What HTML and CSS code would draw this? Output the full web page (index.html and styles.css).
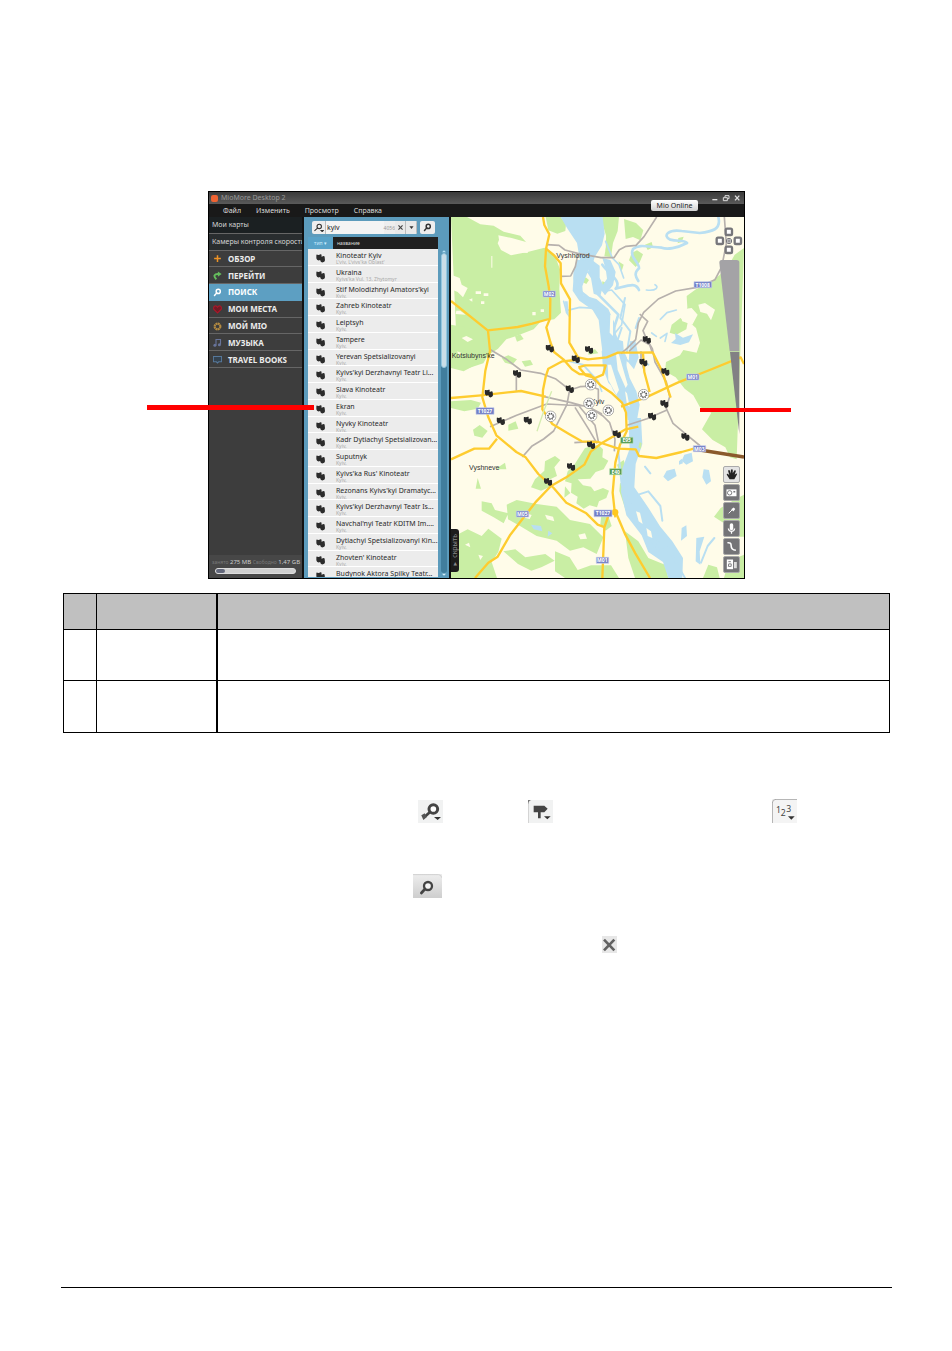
FILE: index.html
```html
<!DOCTYPE html>
<html lang="ru">
<head>
<meta charset="utf-8">
<title>MioMore Desktop 2</title>
<link rel="stylesheet" href="styles.css">
</head>
<body>
<svg class="defs" aria-hidden="true">
  <symbol id="masks" viewBox="-13 -12 26 26"><path d="M-12-8q0-3 3-2l4 1 5-2q3-1 3 2v5l6-2q3 0 3 3l1 9q-1 5-6 6-5 1-7-3l-1-4-5 2q-5-2-6-7z"/></symbol>
  <symbol id="lens" viewBox="0 0 24 24"><circle cx="14" cy="9" r="5.5" fill="none" stroke="currentColor" stroke-width="4"/><path d="M10 13l-6 7" stroke="currentColor" stroke-width="4" stroke-linecap="round"/></symbol>
</svg>
<main class="page">
  <figure class="figure">
    <div class="app">
      <header class="titlebar">
        <span class="logo"></span><span class="title">MioMore Desktop 2</span>
        <svg class="window-icons" viewBox="0 0 90 24" fill="none" stroke="#ddd" stroke-width="4"><path d="M4 17h15"/><path d="M37 11h12v9H37zM42 9V5h12v9h-4" stroke-width="3"/><path d="M72 5l13 14M85 5L72 19"/></svg>
      </header>
      <nav class="menubar"><a href="#">Файл</a><a href="#">Изменить</a><a href="#">Просмотр</a><a href="#">Справка</a></nav>
      <button class="online">Mio Online</button>
      <div class="workspace">
        <aside class="sidebar">
          <nav class="sections">
            <a class="plain dark" href="#">Мои карты</a>
            <a class="plain" href="#">Камеры контроля скорости</a>
            <a href="#"><svg viewBox="0 0 24 24"><path d="M12 3v18M3 12h18" stroke="#ee9326" stroke-width="4"/></svg>ОБЗОР</a>
            <a href="#"><svg viewBox="0 0 24 24"><path d="M9 22C0 14 3 7 15 8" fill="none" stroke="#65bd5d" stroke-width="5"/><path d="M13 1l10 7-10 7z" fill="#65bd5d"/></svg>ПЕРЕЙТИ</a>
            <a class="active" href="#"><svg viewBox="0 0 24 24"><use href="#lens"/></svg>ПОИСК</a>
            <a href="#"><svg viewBox="0 0 24 24"><path d="M12 21L2 11C0 2 8 0 12 6c4-6 12-4 10 5z" fill="#721a25" stroke="#ad1729" stroke-width="3"/></svg>МОИ МЕСТА</a>
            <a href="#"><svg viewBox="0 0 24 24"><circle cx="12" cy="12" r="8" fill="none" stroke="#b48b42" stroke-width="5" stroke-dasharray="5 1.3"/><circle cx="12" cy="12" r="6" fill="none" stroke="#b48b42" stroke-width="2"/></svg>МОЙ MIO</a>
            <a href="#"><svg viewBox="0 0 24 24"><path d="M8 19V4h12v13" fill="none" stroke="#68749a" stroke-width="3"/><circle cx="5" cy="19" r="4" fill="#68749a"/><circle cx="17" cy="18" r="4" fill="#68749a"/></svg>МУЗЫКА</a>
            <a href="#"><svg viewBox="0 0 24 24"><path d="M1 4h22v14h-8l-3 3-3-3H1z" fill="#34424f" stroke="#56789b" stroke-width="3"/></svg>TRAVEL BOOKS</a>
          </nav>
          <div class="storage">
            <p><span>занято</span> 275 MB <span>Свободно</span> 1,47 GB</p>
            <div class="meter"><i></i></div>
          </div>
        </aside>
        <section class="results">
          <form class="search">
            <div class="search-box">
              <svg class="search-type" viewBox="0 0 30 24"><circle cx="17" cy="9" r="6" fill="none" stroke="#333" stroke-width="3"/><path d="M13 13l-9 8M22 20l3 3 3-3z" stroke="#333" stroke-width="3"/></svg>
              <input type="text" value="kyiv" aria-label="Поиск">
              <span class="count">4056</span>
              <button type="button" aria-label="Очистить"><svg viewBox="0 0 24 24"><path d="M5 5l14 14M19 5L5 19" stroke="#444" stroke-width="4"/></svg></button>
              <button type="button" aria-label="Ещё"><svg viewBox="0 0 24 24"><path d="M5 8h14l-7 9z" fill="#333"/></svg></button>
            </div>
            <button class="go" type="button" aria-label="Найти"><svg viewBox="0 0 24 24"><use href="#lens"/></svg></button>
          </form>
          <div class="list-head"><button>тип ▾</button><span>название</span></div>
          <div class="list-area">
            <div class="list-clip"><ul class="list">
              <li><svg><use href="#masks"/></svg><div><b>Kinoteatr Kyiv</b><small>L'viv, L'vivs'ka Oblast'</small></div></li>
              <li><svg><use href="#masks"/></svg><div><b>Ukraina</b><small>Kyivs'ka Vul. 13, Zhytomyr</small></div></li>
              <li><svg><use href="#masks"/></svg><div><b>Stif Molodizhnyi Amators'kyi</b><small>Kyiv,</small></div></li>
              <li><svg><use href="#masks"/></svg><div><b>Zahreb Kinoteatr</b><small>Kyiv,</small></div></li>
              <li><svg><use href="#masks"/></svg><div><b>Leiptsyh</b><small>Kyiv,</small></div></li>
              <li><svg><use href="#masks"/></svg><div><b>Tampere</b><small>Kyiv,</small></div></li>
              <li><svg><use href="#masks"/></svg><div><b>Yerevan Spetsializovanyi</b><small>Kyiv,</small></div></li>
              <li><svg><use href="#masks"/></svg><div><b>Kyivs'kyi Derzhavnyi Teatr Li...</b><small>Kyiv,</small></div></li>
              <li><svg><use href="#masks"/></svg><div><b>Slava Kinoteatr</b><small>Kyiv,</small></div></li>
              <li><svg><use href="#masks"/></svg><div><b>Ekran</b><small>Kyiv,</small></div></li>
              <li><svg><use href="#masks"/></svg><div><b>Nyvky Kinoteatr</b><small>Kyiv,</small></div></li>
              <li><svg><use href="#masks"/></svg><div><b>Kadr Dytiachyi Spetsializovan...</b><small>Kyiv,</small></div></li>
              <li><svg><use href="#masks"/></svg><div><b>Suputnyk</b><small>Kyiv,</small></div></li>
              <li><svg><use href="#masks"/></svg><div><b>Kyivs'ka Rus' Kinoteatr</b><small>Kyiv,</small></div></li>
              <li><svg><use href="#masks"/></svg><div><b>Rezonans Kyivs'kyi Dramatyc...</b><small>Kyiv,</small></div></li>
              <li><svg><use href="#masks"/></svg><div><b>Kyivs'kyi Derzhavnyi Teatr Is...</b><small>Kyiv,</small></div></li>
              <li><svg><use href="#masks"/></svg><div><b>Navchal'nyi Teatr KDITM Im....</b><small>Kyiv,</small></div></li>
              <li><svg><use href="#masks"/></svg><div><b>Dytiachyi Spetsializovanyi Kin...</b><small>Kyiv,</small></div></li>
              <li><svg><use href="#masks"/></svg><div><b>Zhovten' Kinoteatr</b><small>Kyiv,</small></div></li>
              <li><svg><use href="#masks"/></svg><div><b>Budynok Aktora Spilky Teatr...</b></div></li>
            </ul></div>
            <div class="scroll"><svg viewBox="0 0 18 9"><path d="M3 8l6-6 6 6z" fill="#b5e2f6"/></svg><div class="track"><i></i></div><svg viewBox="0 0 18 9"><path d="M3 1l6 6 6-6z" fill="#d5f0fa"/></svg></div>
          </div>
        </section>
        <section class="map">
          <svg class="map-art" viewBox="18 97 879 1083" preserveAspectRatio="xMidYMid slice">
            <rect x="18" y="97" width="879" height="1083" fill="#fffce9"/>
            <g fill="#c9eea4">
              <path d="M18 97h48l40 22 40 4 30 18 50 12 25 28-85-25-8 20 10 20 30 16 50-10 50-13 30 20 17 45-2 60 5 70-20 20-40 6-22 24-52 20-30 10-25 28-30 20-14 24-50 16-27-4z"/>
              <path d="M302 97h45l16 22-2 20-24 8-27-10zM466 97h56l-4 42-14 36-6 42-20-2 9-50zM537 103l36 12 22 22-9 30-22-10-22 6zM600 180l20-8 4 16-16 8z"/>
              <path d="M897 190l-28 20-22 40-24 22-38 28-30 12-30 22 2 34-8 32 34 30 12 44-10 30-40-8-10 16-42 20-3 28 32 18 27 34 26 20 20 36 34 16-28 50 32 32 38 22 14 30 20 6z"/>
              <path d="M18 420l90 16 14 66-26 36-40 22-38-10zM18 650l60-4 30 8-10 18-40 8-40-10zM84 735l20-14 24 18-16 20-24-6zM190 720l22-10 8 22-30 6zM98 880l10 32-16 0zM156 850l24-16 4 20-26 0zM210 455l16-6 10 14-20 8zM170 520l20-8 26 12-14 16-22-6zM230 530l26-4 8 14-24 6z"/>
              <path d="M300 830l30-16 16 12-18 22 8 26-34 16 14 16-28 12-30-10 12-24 28-26zM420 790l40-10 14 14-2 24 18 10-14 26-24 8-16 20-36 2-14 14-26-8 8-30 20-20zM380 890l20-4 14 16 24 4 10 14 26-10 18 8-8 22-22 10-6 18-22-6-18 10-22-16 4-20-20-12zM470 984l20 10 10 30-18 14-16-20zM360 905l16 20-18 14zM516 840l20-14 12 36-22 8zM525 895l26 10 2 40 24 24 16 50-28-10-22-30-20-60z"/>
              <path d="M110 950l30 6 10 20 40 10-14 30-30-18-36-20zM185 960l30-14 60 12 60 8 40 40 60 12 40 40-20 50-40-20-40 10-40-30-60-14-50-30-36-20zM18 1060l50-26 42 20 20-22 40 30-10 40-20 30 16 48H18zM175 1100l36-6 30 24 60-10 28 20-40 20-30 10-40-20zM330 1100l44 18 24 38 40-14 60 0 24 38H360l-30-20zM540 1040l40 30 30 50 50 20 10 40H570l-20-60z"/>
              <path d="M680 420l26-20 22 14-4 20-30 16-20-6zM897 930l-30 16-40 24-20 26 30 20 24 40 36 0zM790 1140l26 8 8 32h-50zM850 1130l47-20v70h-60zM648 1055l14 10-8 20-10-14zM560 205l16-8 18 12-10 24-12 14-20-20zM472 290l16 6-4 20-14 4zM422 278l10 8-8 12-12-6zM700 160l16-4-6 16-12 4zM430 500l20-6 10 12-30 4zM484 130l8 50-10 20zM520 230l16 10-6 20zM465 380l10 4-4 20-8-4z"/>
            </g>
            <g fill="#fffce9"><path d="M18 270l26 10 6 20 18 10-14 28-16-16-20-8zM160 152l40 8 54 15-6 30-50-4-10-14-24-8zM92 320h16v8h-16zM116 326h14v8h-14zM108 350h10v8h-10zM72 345l10-4v10zM34 378h12l16 12-30-2zM262 382h10v10h-10zM287 374h10v8h-10zM139 214h3v35h-3zM50 460l14-6 20 10-16 8zM36 500l12 4-4 12zM760 360l20-5 30 20-12 32-12-20-20-5zM700 375l40-5 18 20-16 30-30-10zM240 985l20 6-6 12-16-4zM300 990l24 6 4 14-22-6zM60 1080l12-6 4 14zM100 1110l14 4-8 12zM400 1050l20-4 6 16-20 2z"/></g>
            <g fill="#b9dff2">
              <path d="M347 97h126l6 50-8 35-22 35-5 18h-38l-10-60-30-45z"/>
              <path d="M398 225l48 6-18 30-16 44 2 26 40 12 36 30 20 45 6 60 20 70 18 58 10 60-16 20-20-30-24-40-25-60-10-80-8-70-18-30-40-28-20-30 4-60z"/>
              <path d="M470 500l34-40 30 10 4 50 16 60 20 40 10 40-8 46h-28l-6-46-22-36-30-30-16-44z"/>
              <path d="M440 225l24 18 0 36 10 22-8 34-20-8-8-46-10-16zM472 220l24 6 16 36-8 40-24 30-14-20 20-30-4-30zM550 700l38 0 4 78-20 60-4 70 40 58 38 60 36 44 32 50-2 60h-42l-16-48-44-30-20-50-46-60-16-70 4-70 22-60z"/>
              <path d="M620 1040l16 0 20 50-10 6-24-36zM555 470l16-2 10 50-14 36-16-20zM690 445l24 14 30-10-12 24-26 8-28-6 14-12zM718 810l22-6 4 26-20 10-14-12zM665 858l24-6 6 22-26 16-14-14zM776 854l16 2 6 34-14 10-12-22zM702 830l8-8 4 14-12 4zM360 350l8 0 4 48-10-14zM710 1030l14-8 2 32-18 14zM754 1060l24-4-14 44 2 40-14-10zM258 1020l30 4 4 16-26-6zM310 1038l12 8-14 10z"/>
            </g>
            <g fill="none" stroke="#b9dff2" stroke-linecap="round" stroke-linejoin="round">
              <path stroke-width="8" d="M820 97c10 38-20 44-56 48l-54-6c-38-6-60 14-34 26 24 6 40 0 50 10-30 16-60 20-76 14-40-2-68-12-86 4-12 26 20 40 18 58-16 14-10 26-2 38"/>
              <path stroke-width="8" d="M398 230c-18 52-10 80 28 106l45 36c30 40 8 90 38 110M472 240c22 30 60 50 40 72 40-10 60-20 70 4M460 330l60 60-16 50 38 80-4 50"/>
              <path stroke-width="5" d="M356 350l8 28 40-10 60 4M374 530l40 10 46 50 10 30M420 260l30 10 26 50 24-4 40 44-10 60-24 30M482 170l20 50 20 20 14 40M660 470l6-24-20 14M646 404l20-20 28-8M620 445l14 10M630 300c12 6 6 20-26 16"/>
              <path stroke-width="6" d="M480 470l36 60 10 100 40 60M530 430l-20 60 40 40M540 340l-14 60 30 40-10 60M590 530l20 10M582 400l-10 30M520 800l10 100 60 100 40 50 50 60 40 70M540 960l30 50 40 30 24 60M580 930l30-10 36 44 6 44M808 1060l-20 24-20 50M600 846l16 20M628 1080l-10-16M572 1000l38 60 60 30"/>
            </g>
            <g fill="#fffce9"><path d="M488 540l10 0 24 76-8 14-24-44zM512 500l10 10 26 90-6 10-24-54zM496 390l8 4 0 60-10-10zM456 560l8 8 14 40-8 4zM573 980l12 4 8 34-12-8zM604 1030l14 10 4 20-14-6zM540 620l6 6 8 40-8-6z"/></g>
            <path d="M584 772l6 4-2 16-8-4z" fill="#c9eea4"/>
            <g fill="none" stroke="#b7b1ad" stroke-width="5" stroke-linejoin="round">
              <path d="M306 180l36 2 18 14 38 10 70 13h39l16-24 20-10 30-3 24-26 38-59M399 206l-8 40-14 28-30 1M838 97l6 80-14 70-20 38-58 24-60 10-52 24-44 40-16 32-8 50-26 26-18 16M584 388l24 22-14 28 10 24 18 30 8 40 34 60 10 44-10 32"/>
              <path d="M134 494l48 28 45 34 60 10 44 16 44 34 30-10 40-2M214 570v48M135 726l80-34 90-34 120 6 46 24M298 636l80 18 60 16 36 24 20 20 16 50-2 36M374 615l-8 44-40 80-30 24-36 22-28 32M390 668l40 64 26 44M400 662l50 60 10 48M388 774l60-4M546 722l60-20 60-26M658 658l26 58 36 30 46 38M552 500l36-34 26 14 8 24M588 500v24l10 34"/>
              <path d="M425 600l35 14v40"/>
            </g>
            <path d="M746 793l151 24" stroke="#8b5a2c" stroke-width="10"/>
            <g fill="none" stroke="#fecc2f" stroke-width="7" stroke-linejoin="round">
              <path d="M294 97l4 24 15 28-10 44-3 52 11 60 5 40-1 57-11 26 12 44 11 30 28 22 26 30 22 14 32 2 34 34 32 22 30 28 12 30 2 56-20 40-14 54-8 90 8 74"/>
              <path d="M303 192l26 22 18 22 1 60 27 48-2 130 26 44 30 6 56-6 34-14h56l48-1 30 60 12 40 12 36"/>
              <path d="M18 349l110 88 90-10 44-10 50-14M129 438l6 60-14 60-9 80 18 60 24 54 60 50 28 16 38 50 46 42 38 44 60 32 34 34 22 8M18 640l90-8 120-13 74 17M18 824l70-32h44l24-30M594 506l4 56 16 60M392 526l-40 4-42 22-8 24-8 40-2 58 30 44 50 30 38 22 50 2 60 20 52 2 10 20 52 6 76-18 50-14"/>
              <path d="M90 1180l40-46 28-18 38-66 48-62 30-38 44-46 46-26 54-38 20-40 34-26 70-40 38-8M528 666l80-30 90-42 96-38 93-38 10 20M492 988l-14 40-6 152M511 980l30 70 30 56 44 74M400 548l20-6h62l-8 28-24 10-28-8-20-24"/>
            </g>
            <circle cx="510" cy="983" r="10" fill="#ffc81f"/>
            <path d="M320 620l-24 60-20 60" fill="none" stroke="#d5edb0" stroke-width="4"/>
            <g class="road-signs" font-size="15">
              <g fill="#737fc6" stroke="#c5cbed" stroke-width="2"><path d="M294 319h37v18h-37zM93 669h54v20H93zM214 979h37v18h-37zM447 976h54v20h-54zM454 1118h37v18h-37zM747 291h53v18h-53zM725 568h37v18h-37zM745 783h37v18h-37z"/></g>
              <g fill="#51994e" stroke="#b3ddb0" stroke-width="2"><path d="M527 758h37v18h-37zM494 852h36v18h-36z"/></g>
              <g fill="#fff" text-anchor="middle"><text x="312" y="334">M02</text><text x="120" y="685">T1027</text><text x="232" y="994">M05</text><text x="474" y="992">T1027</text><text x="472" y="1133">M01</text><text x="773" y="306">T1008</text><text x="743" y="583">M01</text><text x="763" y="798">M03</text><text x="545" y="773">E95</text><text x="512" y="867">E40</text></g>
            </g>
            <g class="places"><text x="334" y="219">Vyshhorod</text><text x="20" y="519">Kotsiubyns'ke</text><text x="72" y="855">Vyshneve</text><text x="438" y="659">Kyiv</text></g>
            <g fill="#292929">
              <use href="#masks" x="301" y="479" width="26" height="26"/><use href="#masks" x="419" y="483" width="26" height="26"/><use href="#masks" x="379" y="511" width="26" height="26"/><use href="#masks" x="203" y="555" width="26" height="26"/><use href="#masks" x="361" y="601" width="26" height="26"/><use href="#masks" x="118" y="614" width="26" height="26"/><use href="#masks" x="154" y="697" width="26" height="26"/><use href="#masks" x="235" y="695" width="26" height="26"/><use href="#masks" x="425" y="769" width="26" height="26"/><use href="#masks" x="365" y="834" width="26" height="26"/><use href="#masks" x="296" y="879" width="26" height="26"/><use href="#masks" x="502" y="736" width="26" height="26"/><use href="#masks" x="592" y="453" width="26" height="26"/><use href="#masks" x="582" y="521" width="26" height="26"/><use href="#masks" x="648" y="549" width="26" height="26"/><use href="#masks" x="645" y="645" width="26" height="26"/><use href="#masks" x="608" y="683" width="26" height="26"/><use href="#masks" x="708" y="744" width="26" height="26"/>
            </g>
            <symbol id="cog" viewBox="0 0 36 36"><circle cx="18" cy="18" r="16" fill="#fff" stroke="#858585" stroke-width="2"/><circle cx="18" cy="18" r="9" fill="none" stroke="#555" stroke-width="4" stroke-dasharray="3.5 3.57"/><circle cx="18" cy="18" r="7" fill="#fff" stroke="#555" stroke-width="2"/></symbol>
            <use href="#cog" x="419" y="582" width="36" height="36"/><use href="#cog" x="414" y="638" width="36" height="36"/><use href="#cog" x="422" y="675" width="36" height="36"/><use href="#cog" x="472" y="659" width="36" height="36"/><use href="#cog" x="299" y="677" width="36" height="36"/><use href="#cog" x="578" y="612" width="36" height="36"/>
            <g fill="#fff" stroke="#77777b" stroke-width="7"><rect x="842" y="132" width="19" height="19" rx="4"/><rect x="815" y="159" width="19" height="19" rx="4"/><rect x="869" y="159" width="19" height="19" rx="4"/><rect x="842" y="186" width="19" height="19" rx="4"/><circle cx="852" cy="169" r="8" stroke-width="3"/><path d="M844 169h16M852 161v16" stroke-width="3"/></g>
            <path d="M830 226h45q8 0 8 8v266h-29L823 234q0-8 7-8z" fill="#a4a3a6"/><path d="M855 502h28v246z" fill="#828184"/>
          </svg>
          <div class="tools">
            <button class="light" aria-label="Рука"><svg viewBox="0 0 48 48"><path d="M18 39L9 25q-1-5 4-3l4 4-4-14q3-5 6 0l3 9V9q4-4 6 0v11l5-9q4-2 5 2l-4 12 5-4q5 0 2 4l-8 14z" fill="#222"/></svg></button>
            <button aria-label="Камера"><svg viewBox="0 0 48 48"><path d="M8 14h32v22H8z" fill="#fff"/><circle cx="18" cy="25" r="7" fill="none" stroke="#77777b" stroke-width="3"/><path d="M30 19h6v5h-6z" fill="#77777b"/></svg></button>
            <button aria-label="Булавка"><svg viewBox="0 0 48 48"><path d="M15 33l12-12" stroke="#fff" stroke-width="3"/><path d="M23 20l8-6 5 5-6 8z" fill="#fff"/></svg></button>
            <button aria-label="Запись"><svg viewBox="0 0 48 48" fill="none" stroke="#fff"><path d="M24 13v11" stroke-width="11" stroke-linecap="round"/><path d="M14 24q1 9 10 9t10-9M24 32v9" stroke-width="4"/></svg></button>
            <button aria-label="Маршрут"><svg viewBox="0 0 48 48" fill="none" stroke="#fff" stroke-width="5"><path d="M11 12q12-2 12 10t15 14"/></svg></button>
            <button aria-label="Экспорт"><svg viewBox="0 0 48 48"><path d="M9 8h20v31H9z" fill="#fff"/><path d="M32 16h9v20h-9z" fill="#ddd"/><path d="M14 15h8M14 30h9v-8h-8z" stroke="#77777b" stroke-width="3" fill="none"/></svg></button>
          </div>
          <button class="hide-tab"><span>▾ скрыть</span></button>
        </section>
      </div>
    </div>
    <i class="callout callout-list"></i><i class="callout callout-map"></i>
  </figure>

  <table class="legend">
    <colgroup><col class="col-num"><col class="col-name"><col></colgroup>
    <thead><tr><th></th><th></th><th></th></tr></thead>
    <tbody><tr><td></td><td></td><td></td></tr><tr><td></td><td></td><td></td></tr></tbody>
  </table>

  <div class="glyphs glyphs-types">
    <svg width="25" height="23" viewBox="0 0 75 69"><rect width="75" height="69" fill="#f1f2f2"/><circle cx="46" cy="27" r="13" fill="#fff" stroke="#444" stroke-width="9"/><path d="M36 36L22 49" stroke="#444" stroke-width="8"/><path d="M10 46l10-6 6 12-10 8z" fill="#555"/><path d="M48 51h21L59 60z" fill="#333"/></svg>
    <svg width="25" height="23" viewBox="0 0 75 69"><rect width="75" height="69" fill="#f1f2f2"/><path d="M0 0h10Q2 2 1 12H0z" fill="#777"/><path d="M1 69V10" stroke="#bbb" stroke-width="2"/><path d="M17 17h32l10 9-10 11H38v18h-8V37H17z" fill="#444"/><path d="M48 49h20L58 58z" fill="#333"/></svg>
    <svg width="25" height="24" viewBox="0 0 75 72"><rect width="75" height="72" fill="#f4f4f4"/><path d="M1 72V12Q1 1 12 1h63" fill="none" stroke="#aaa" stroke-width="3"/><g class="digits"><text x="12" y="43">1</text><text x="26" y="51">2</text><text x="43" y="39">3</text></g><path d="M48 52h20L58 62z" fill="#333"/></svg>
  </div>
  <div class="glyphs glyphs-find">
    <svg width="29" height="24" viewBox="0 0 87 72"><defs><linearGradient id="fade" x2="0" y2="1"><stop stop-color="#eee"/><stop offset="1" stop-color="#cecece"/></linearGradient></defs><path d="M0 0h87v72H0z" fill="url(#fade)"/><path d="M0 2h77q8 0 9 9" fill="none" stroke="#d0d0d0" stroke-width="3"/><circle cx="45" cy="36" r="12" fill="#f5f5f5" stroke="#444" stroke-width="7"/><path d="M36 45L25 57" stroke="#444" stroke-width="8" stroke-linecap="round"/></svg>
  </div>
  <div class="glyphs glyphs-clear">
    <svg width="15" height="17" viewBox="0 0 45 51"><path d="M0 0h45v51H0z" fill="#e7e7e7"/><path d="M6 11l31 32M37 11L6 43" stroke="#626262" stroke-width="8"/></svg>
  </div>
  <hr class="footer-rule">
</main>
</body>
</html>
```
FILE: styles.css
```css
* { box-sizing: border-box; }
body { margin: 0; background: #fff; font-family: "Noto Sans", sans-serif; }
button { border: 0; padding: 0; font: inherit; color: inherit; }
a { color: inherit; text-decoration: none; }
ul, p { margin: 0; padding: 0; list-style: none; }
svg { display: block; }
.defs { position: absolute; width: 0; height: 0; }
.page { padding: 191px 60px 0 61px; }

.figure { position: relative; max-width: 537px; margin: 0 auto; font-size: 7px; line-height: 8px; }
.app { position: relative; border: 1px solid #000; background: #111; overflow: hidden; }
.titlebar { display: flex; align-items: center; gap: 3px; height: 12px; padding: 0 3px 0 2px; background: linear-gradient(#3a3a3a, #5a5a5a); color: #999; }
.logo { width: 7px; height: 7px; border-radius: 2px; background: #ef6332; }
.title { flex: 1; }
.window-icons { width: 30px; height: 8px; }
.menubar { display: flex; gap: 15px; align-items: center; height: 13px; padding-left: 14px; background: #191919; color: #ddd; }
.online { position: absolute; right: 46px; top: 8px; width: 47px; height: 11px; border-radius: 2px; background: linear-gradient(#fff, #d2d2d2); color: #222; font-size: 7px; }
.workspace { display: flex; min-height: 361px; }

.sidebar { flex: 0 0 93px; display: flex; flex-direction: column; justify-content: space-between; background: #3d3d3d; overflow: hidden; }
.sections { display: grid; grid-auto-rows: 1fr; height: 151px; color: #ececec; font-weight: bold; font-size: 8px; }
.sections a { display: flex; align-items: center; gap: 6px; padding: 1px 0 0 4px; border-bottom: 1px solid #666; white-space: nowrap; }
.sections svg { width: 9px; height: 9px; }
.sections .plain { padding-left: 3px; background: #292d2f; color: #d5d5d5; font-size: 7px; font-weight: normal; }
.sections .dark { background: #1b2022; }
.sections .active { background: #5d9fc2; border-color: #5d9fc2; color: #fff; }
.storage { padding: 4px 6px 4px 3px; background: #474747; color: #ccc; font-size: 6px; line-height: 7px; white-space: nowrap; }
.storage span { color: #777; font-size: 5px; }
.meter { height: 6px; margin: 2px 0 0 3px; border: 1px solid #ddd; border-radius: 3px; background: #cfcfcf; }
.meter i { display: block; width: 12%; height: 4px; border-radius: 2px; background: #62677a; }

.results { flex: 0 0 145px; display: flex; flex-direction: column; margin: 0 2px; padding: 4px 2px 1px 4px; background: #5c9bbc; overflow: hidden; }
.search { display: flex; gap: 3px; height: 13px; padding: 0 12px 0 4px; }
.search-box { flex: 1; display: flex; align-items: center; border-radius: 2px; background: #eee; overflow: hidden; }
.search-type { width: 11px; height: 9px; margin: 0 1px; }
.search input { flex: 1; min-width: 0; height: 13px; padding: 0 1px; border: 0; border-left: 1px solid #bbb; background: #f4f4f4; color: #222; font: inherit; }
.count { color: #999; font-size: 5px; }
.search-box button { width: 11px; height: 13px; padding: 0 2px; background: #e9e9e9; border-right: 1px solid #bbb; }
.search-box button svg { width: 7px; height: 7px; }
.search .go { width: 15px; padding: 2px 3px; border-radius: 2px; background: #eee; color: #333; }
.go svg { width: 9px; height: 9px; }
.list-head { display: flex; align-items: center; gap: 4px; height: 12px; margin: 3px 9px 0 0; background: #202020; color: #ddd; font-size: 5px; }
.list-head button { width: 25px; height: 12px; background: #58a2c8; color: #cdeeff; }
.list-area { display: flex; gap: 3px; height: 328px; }
.list-clip { flex: 1; overflow: hidden; background: #ececec; }
.list { display: grid; grid-auto-rows: 1fr; height: 335px; }
.list li { display: flex; align-items: flex-start; gap: 11px; padding: 3px 0 0 8px; box-shadow: 0 -1px #fff; }
.list svg { flex: none; width: 9px; height: 9px; margin-top: 2px; fill: #2c2c2c; }
.list div { white-space: nowrap; }
.list b { display: block; color: #292929; font-weight: normal; line-height: 8px; }
.list small { display: block; color: #aaa; font-size: 5px; line-height: 5px; }
.scroll { flex: 0 0 6px; display: flex; flex-direction: column; }
.scroll svg { width: 6px; height: 4px; }
.track { flex: 1; border-radius: 3px; background: #417e9e; }
.track i { display: block; height: 36%; border: 1px solid #92c6df; border-radius: 3px; background: #c9dde7; }

.map { position: relative; flex: 1; overflow: hidden; background: #fffce9; }
.map-art { width: 100%; height: 361px; }
.road-signs { font-weight: bold; }
.places { fill: #333; font-family: "Liberation Sans", sans-serif; font-size: 21px; }
.tools { position: absolute; right: 4px; bottom: 6px; display: grid; grid-auto-rows: 1fr; gap: 1px; width: 17px; height: 106px; }
.tools button { border: 1px solid #aaa; border-radius: 2px; background: #747477; }
.tools .light { background: #e4e4e4; }
.tools svg { width: 15px; height: 15px; }
.hide-tab { position: absolute; left: 0; bottom: 6px; width: 8px; height: 43px; border-radius: 0 3px 3px 0; background: #1c1c1c; color: #888; font-size: 7px; line-height: 8px; }
.hide-tab span { display: block; writing-mode: vertical-rl; transform: rotate(180deg); }
.callout { position: absolute; background: #f00; }
.callout-list { left: -61px; top: 214px; width: 167px; height: 5px; }
.callout-map { right: -46px; top: 217px; width: 91px; height: 4px; }

.legend { width: calc(100% - 4px); margin: 14px 2px 0; border-collapse: collapse; table-layout: fixed; }
.legend .col-num { width: 33px; }
.legend .col-name { width: 120px; }
.legend th, .legend td { height: 52px; padding: 0; border: 1px solid #000; }
.legend th { height: 36px; background: #c0c0c0; }
.legend tbody tr:first-child td { height: 51px; }
.legend tr > :nth-child(2) { border-right-width: 2px; }
.glyphs { display: grid; }
.glyphs-types { grid-template-columns: 110px 244px auto; padding-left: 357px; margin-top: 66px; align-items: end; }
.glyphs-find { padding-left: 352px; margin-top: 51px; }
.glyphs-clear { padding-left: 541px; margin-top: 38px; }
.digits { fill: #444; font-size: 26px; }
.footer-rule { height: 1px; margin: 334px 0 0; border: 0; background: #000; }
```
